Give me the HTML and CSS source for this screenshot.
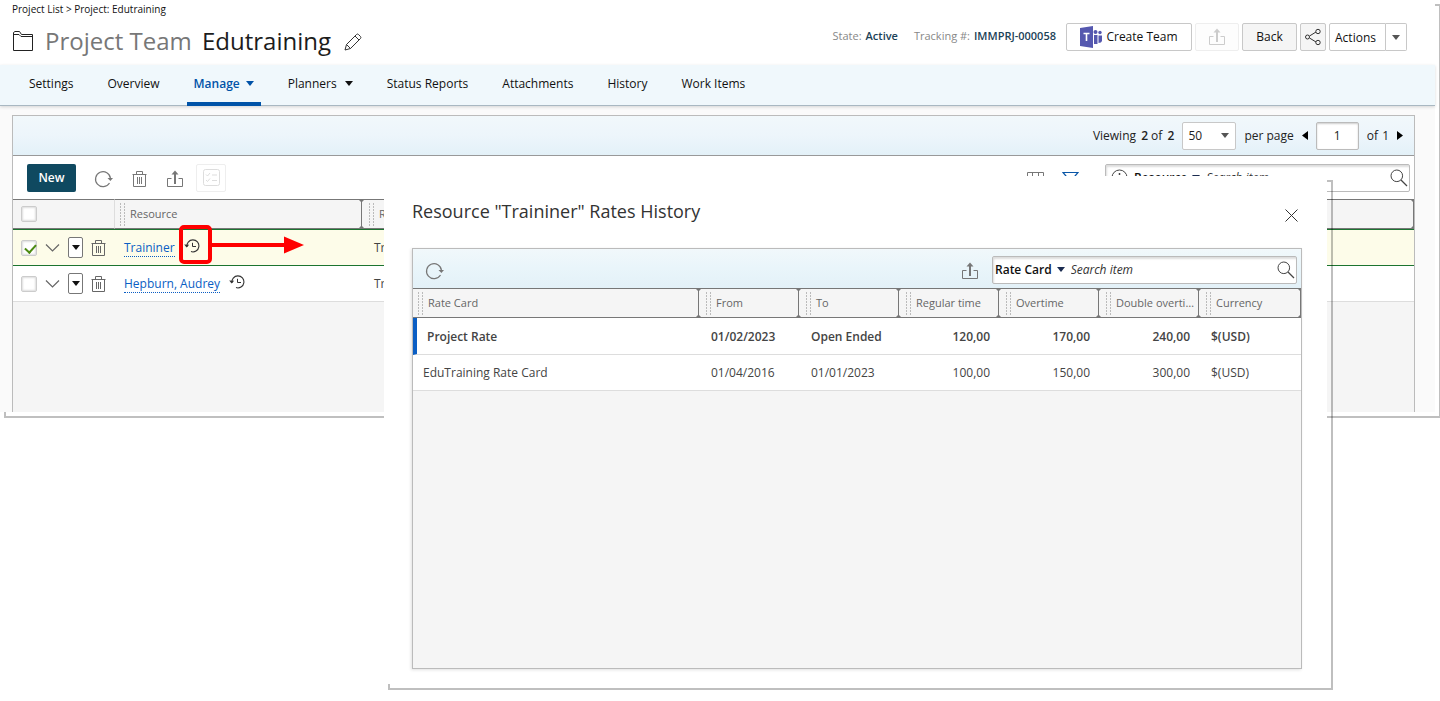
FILE: index.html
```
<!DOCTYPE html>
<html lang="en">
<head>
<meta charset="utf-8">
<title>Project Team Edutraining</title>
<link rel="stylesheet" href="styles.css">
</head>
<body>
<svg class="sprite" aria-hidden="true">
  <symbol id="i-share" viewBox="0 0 18 18"><path d="M5.5 8.5H1.5V16.5H16.5V8.5H12.5" fill="none" stroke="currentColor"/><path d="M9 14V2.500" stroke="currentColor" stroke-width="2"/><path d="M5.500 4.500L9 .5L12.500 4.500Z" fill="currentColor"/></symbol>
  <symbol id="i-refresh" viewBox="0 0 20 18"><path d="M15.500 13A7.500 7.500 0 1 1 16.500 8.500" fill="none" stroke="currentColor" stroke-width="1.200"/><path d="M13.500 8H19L16.400 11Z" fill="currentColor"/></symbol>
  <symbol id="i-trash" viewBox="0 0 16 18"><path d="M.5 4.500H14.500M4.500 4V1.500H10.500V4M1.500 4.500V16.500H13.500V4.500M5.500 7V14M7.500 7V14M9.500 7V14" fill="none" stroke="currentColor"/></symbol>
  <symbol id="i-chev" viewBox="0 0 15 10"><path d="M1 1.500L7.500 8L14 1.500" fill="none" stroke="currentColor" stroke-width="1.200"/></symbol>
  <symbol id="i-caret" viewBox="0 0 8 5"><path d="M0 0H8L4 5Z" fill="currentColor"/></symbol>
  <symbol id="i-history" viewBox="0 0 16 14"><path d="M3 8A6 6 0 1 1 7 12.600" fill="none" stroke="currentColor" stroke-width="1.100"/><path d="M.2 5.500L5.200 5.800L2.600 8.500Z" fill="currentColor"/><path d="M8.500 3.800V7.500H12" fill="none" stroke="currentColor"/></symbol>
  <symbol id="i-search" viewBox="0 0 18 18"><circle cx="6.800" cy="6.800" r="5.800" fill="none" stroke="currentColor"/><path d="M11 11L17 17" stroke="currentColor" stroke-width="1.200"/></symbol>
</svg>

<div class="window project">
  <main class="page">
    <header class="header">
      <div class="heading">
        <nav class="crumbs"><a href="#">Project List</a> &gt; <a href="#">Project: Edutraining</a></nav>
        <div class="title-row">
          <svg class="folder" width="22" height="22" viewBox="0 0 22 22" fill="none" stroke="#222"><path d="M1.500 20.500V2.500L3 1.500H7.500L9.500 4.500H20.500V20.500ZM1.500 4.500H7L9 6.500H20.500"/></svg>
          <h1><span>Project Team</span> Edutraining</h1>
          <button class="plain" aria-label="Edit title"><svg width="18" height="18" viewBox="0 0 18 18" fill="none" stroke="#333"><path d="M1 17L2.500 11.500L12.500 1.500Q13.500.5 14.500 1.500L16.500 3.500Q17.300 4.500 16.500 5.500L6.500 15.500ZM2.500 11.500L6.500 15.500M11 3L15 7"/></svg></button>
        </div>
      </div>
      <div class="header-side">
        <dl class="facts"><div><dt>State:</dt><dd>Active</dd></div><div><dt>Tracking #:</dt><dd>IMMPRJ-000058</dd></div></dl>
        <button class="btn team"><svg width="22" height="22" viewBox="0 0 22 22" fill="#5558af"><path d="M0 2L13 0V22L0 20Z"/><circle cx="15.500" cy="6" r="2"/><circle cx="20" cy="6.500" r="1.700"/><path d="M14 9H17.500V18H14ZM18.500 9.500H22V15Q21.500 17 18.500 17Z"/><path d="M3.500 7.500H9.500M6.500 7.500V15" fill="none" stroke="#fff" stroke-width="1.600"/></svg>Create Team</button>
        <button class="btn export" aria-label="Export" disabled><svg width="18" height="18"><use href="#i-share"/></svg></button>
        <button class="btn grey back">Back</button>
        <button class="btn grey link" aria-label="Share link"><svg width="16" height="18" viewBox="0 0 16 18" fill="none" stroke="#333"><path d="M4.500 8L11 4M4.500 10L11 14"/><circle cx="2.500" cy="9" r="2"/><circle cx="13" cy="3.500" r="2.200"/><circle cx="13" cy="14.500" r="2.200"/></svg></button>
        <div class="split"><button class="btn actions">Actions</button><button class="btn more" aria-label="More actions"><svg width="8" height="5"><use href="#i-caret"/></svg></button></div>
      </div>
    </header>
    <nav class="tabs">
      <a href="#">Settings</a><a href="#">Overview</a>
      <a href="#" class="active">Manage<svg width="8" height="5"><use href="#i-caret"/></svg></a>
      <a href="#">Planners<svg width="8" height="5"><use href="#i-caret"/></svg></a>
      <a href="#">Status Reports</a><a href="#">Attachments</a><a href="#">History</a><a href="#">Work Items</a>
    </nav>
    <section class="content">
      <div class="panel">
        <div class="pager">
          <span class="count">Viewing <b>2</b> of <b>2</b></span>
          <span class="select"><select aria-label="Items per page"><option>50</option></select><svg width="8" height="5"><use href="#i-caret"/></svg></span>
          <span>per page</span>
          <button class="plain arrow" aria-label="Previous page"><svg width="6" height="9"><path d="M6 0V9L0 4.500Z"/></svg></button>
          <input class="pageno" aria-label="Page" value="1">
          <span>of <span class="total">1</span></span>
          <button class="plain arrow" aria-label="Next page"><svg width="6" height="9"><path d="M0 0V9L6 4.500Z"/></svg></button>
        </div>
        <div class="toolbar">
          <button class="new">New</button>
          <button class="plain tool" aria-label="Refresh"><svg width="20" height="18"><use href="#i-refresh"/></svg></button>
          <button class="plain tool" aria-label="Delete"><svg width="16" height="18"><use href="#i-trash"/></svg></button>
          <button class="plain tool" aria-label="Export"><svg width="18" height="18"><use href="#i-share"/></svg></button>
          <button class="btn list" aria-label="Bulk edit" disabled><svg width="17" height="17" viewBox="0 0 17 17" fill="none" stroke="currentColor"><rect x=".5" y=".5" width="16" height="16" rx="2"/><path d="M3 5.500L4.500 7L7 4M3 11L4.500 12.500L7 9.500M9 6H14M9 11.500H14"/></svg></button>
          <span class="grow"></span>
          <button class="plain tool" aria-label="Columns"><svg width="17" height="16" viewBox="0 0 17 16" fill="none" stroke="currentColor"><path d="M.5 1.500H16.500V15.500H.5ZM5.500 1.500V15.500M11.500 1.500V15.500"/></svg></button>
          <button class="plain tool filter" aria-label="Filter"><svg width="17" height="16" viewBox="0 0 17 16" fill="none" stroke="currentColor" stroke-width="1.200"><path d="M1 1.500H16L10.500 8V15L6.500 12V8Z"/></svg></button>
          <div class="search wide">
            <svg width="17" height="17" viewBox="0 0 17 17" fill="none" stroke="#444"><circle cx="8.500" cy="8.500" r="7.500"/><path d="M8.500 4V6M8.500 7.500V13" stroke-width="1.500"/></svg>
            <button class="plain field">Resource<svg width="8" height="5"><use href="#i-caret"/></svg></button>
            <input aria-label="Search resources" placeholder="Search item">
            <button class="plain" aria-label="Search"><svg width="18" height="18"><use href="#i-search"/></svg></button>
          </div>
        </div>
        <table class="grid resources">
          <colgroup><col class="c-tools"><col class="c-name"><col></colgroup>
          <thead><tr><th class="lead"><input type="checkbox" aria-label="Select all"></th><th class="grip">Resource</th><th class="grip">Role</th></tr></thead>
          <tbody>
            <tr class="selected">
              <td><div class="tools"><input type="checkbox" aria-label="Select Traininer" checked><button class="plain" aria-label="Expand"><svg width="15" height="10"><use href="#i-chev"/></svg></button><button class="menu" aria-label="Row menu"><svg width="8" height="5"><use href="#i-caret"/></svg></button><button class="plain" aria-label="Delete"><svg width="16" height="18"><use href="#i-trash"/></svg></button></div></td>
              <td><div class="name"><a href="#">Traininer</a><span class="history"><button class="plain" aria-label="Rates history"><svg width="16" height="14"><use href="#i-history"/></svg></button><svg class="marker" width="126" height="40" viewBox="0 0 126 40"><rect x="2" y="2" width="29" height="35" rx="3" fill="none" stroke="#f00" stroke-width="4"/><path d="M32 20H107" stroke="#f00" stroke-width="4"/><path d="M105 11.500L125 20L105 28.500Z" fill="#f00"/></svg></span></div></td>
              <td>Trainer</td>
            </tr>
            <tr>
              <td><div class="tools"><input type="checkbox" aria-label="Select Hepburn, Audrey"><button class="plain" aria-label="Expand"><svg width="15" height="10"><use href="#i-chev"/></svg></button><button class="menu" aria-label="Row menu"><svg width="8" height="5"><use href="#i-caret"/></svg></button><button class="plain" aria-label="Delete"><svg width="16" height="18"><use href="#i-trash"/></svg></button></div></td>
              <td><div class="name"><a href="#">Hepburn, Audrey</a><span class="history"><button class="plain" aria-label="Rates history"><svg width="16" height="14"><use href="#i-history"/></svg></button></span></div></td>
              <td>Trainer</td>
            </tr>
          </tbody>
        </table>
      </div>
    </section>
  </main>
</div>

<div class="window dialog" role="dialog" aria-labelledby="dlg-title">
  <div class="dialog-body">
    <div class="dialog-head">
      <h2 id="dlg-title">Resource "Traininer" Rates History</h2>
      <button class="plain" aria-label="Close"><svg width="13" height="13" viewBox="0 0 13 13" stroke="#333"><path d="M.5 .5L12.500 12.500M12.500 .5L.5 12.500"/></svg></button>
    </div>
    <div class="panel rates">
      <div class="ratebar">
        <button class="plain tool" aria-label="Refresh"><svg width="20" height="18"><use href="#i-refresh"/></svg></button>
        <span class="grow"></span>
        <button class="plain tool" aria-label="Export"><svg width="18" height="18"><use href="#i-share"/></svg></button>
        <div class="search">
          <button class="plain field">Rate Card<svg width="8" height="5"><use href="#i-caret"/></svg></button>
          <input aria-label="Search rate cards" placeholder="Search item">
          <button class="plain" aria-label="Search"><svg width="18" height="18"><use href="#i-search"/></svg></button>
        </div>
      </div>
      <table class="grid">
        <colgroup><col><col class="c-rate"><col class="c-rate"><col class="c-rate"><col class="c-rate"><col class="c-rate"><col class="c-rate"></colgroup>
        <thead><tr><th class="grip">Rate Card</th><th class="grip">From</th><th class="grip">To</th><th class="grip">Regular time</th><th class="grip">Overtime</th><th class="grip">Double overtime</th><th class="grip">Currency</th></tr></thead>
        <tbody>
          <tr class="current"><td>Project Rate</td><td>01/02/2023</td><td>Open Ended</td><td class="num">120,00</td><td class="num">170,00</td><td class="num">240,00</td><td>$(USD)</td></tr>
          <tr><td>EduTraining Rate Card</td><td>01/04/2016</td><td>01/01/2023</td><td class="num">100,00</td><td class="num">150,00</td><td class="num">300,00</td><td>$(USD)</td></tr>
        </tbody>
      </table>
    </div>
  </div>
</div>
</body>
</html>
```
FILE: styles.css
```
* { box-sizing: border-box; }
body { margin: 0; position: relative; min-height: 100vh; overflow: hidden; background: #fff; font: 12px/16px "Open Sans", sans-serif; color: #222; }
button, input, select { font: inherit; color: inherit; }
button { padding: 0; }
a { color: inherit; text-decoration: none; }
svg { display: block; flex: none; }
.sprite { position: absolute; width: 0; height: 0; }
.plain { border: 0; background: none; display: flex; align-items: center; }
.grow { flex: 1; }

/* Offset outline behind each window */
.window { position: relative; isolation: isolate; }
.window::before { content: ""; position: absolute; inset: 4px -6px -6px 4px; border: 2px solid rgba(0, 0, 0, .25); z-index: -1; }
.project { margin-right: 5px; }
.page { background: #fff; }

.header { display: flex; justify-content: space-between; height: 65px; padding: 0 28px 0 12px; }
.crumbs { font-size: 10px; line-height: 18px; color: #111; }
.title-row { display: flex; align-items: center; height: 46px; }
.title-row .plain { margin-left: 13px; padding-top: 2px; }
h1 { margin: 0 0 0 11px; font-size: 24px; line-height: 32px; font-weight: 400; color: #1c1c1c; }
h1 span { color: #777; margin-right: 4px; }
.header-side { display: flex; gap: 3px; padding-top: 23px; align-items: flex-start; }
.facts { display: flex; gap: 16px; margin: 0 7px 0 0; font-size: 11px; line-height: 26px; }
.facts div { display: flex; gap: 4px; }
.facts dt { color: #888; }
.facts dd { margin: 0; color: #1b4257; font-weight: 600; }
.btn { display: flex; align-items: center; justify-content: center; height: 28px; border: 1px solid #c8c8c8; border-radius: 2px; background: #fff; color: #111; }
.grey { background: #f5f5f5; }
.team { width: 126px; gap: 4px; }
.export { width: 44px; border-color: #eee; color: #ccc; background: #fdfdfd; }
.back { width: 55px; }
.link { width: 26px; }
.split { display: flex; }
.actions { width: 57px; padding: 1px 4px 0 0; border-radius: 2px 0 0 2px; }
.more { width: 21px; border-left: 0; border-radius: 0 2px 2px 0; color: #555; }

.tabs { position: relative; display: flex; gap: 20px; height: 41px; padding-left: 22px; background: #f0f8fc; border-bottom: 1px solid #a9b8c2; box-shadow: 0 1px 3px rgba(0, 0, 0, .15); }
.tabs a { display: flex; align-items: center; gap: 8px; height: 41px; padding: 0 7px; border-bottom: 4px solid transparent; color: #111; }
.tabs .active { gap: 6px; color: #0053a8; border-color: #0053a8; font-weight: 600; }

.content { padding: 9px 20px 0 12px; background: #fafafa; }
.panel { border: 1px solid #bbb; background: #f5f5f5; }
.content .panel { border-bottom: 0; min-height: 297px; }
.pager { display: flex; align-items: center; justify-content: flex-end; gap: 8px; height: 40px; padding-right: 11px; background: linear-gradient(#f1f8fb, #edf5fb 50%, #e3f1f8); border-bottom: 1px solid #999; }
.pager b { margin-left: 2px; font-weight: 600; }
.total { margin-left: 1px; }
.select { position: relative; display: flex; align-items: center; }
.select select { appearance: none; width: 54px; height: 28px; padding: 0 5px; border: 1px solid #c8c8c8; border-radius: 2px; background: #fff; }
.select svg { position: absolute; right: 7px; color: #555; pointer-events: none; }
.arrow { height: 16px; }
.pageno { width: 43px; height: 28px; padding: 0; text-align: center; border: 1px solid #bbb; border-radius: 2px; background: #fff; box-shadow: inset 0 1px 2px rgba(0, 0, 0, .2); }

.toolbar { display: flex; align-items: center; gap: 18px; height: 43px; padding: 0 4px 0 14px; background: #fff; }
.new { width: 49px; height: 28px; border: 0; border-radius: 2px; background: #0f4960; color: #fff; font-weight: 600; }
.tool { padding-top: 2px; color: #777; }
.list { width: 30px; margin-left: -6px; border-color: #eee; color: #ddd; }
.filter { color: #0a57a8; margin-right: 8px; }
.search { display: flex; align-items: center; gap: 6px; width: 305px; height: 28px; padding: 0 1px 0 2px; background: #fff; border: 1px solid #bbb; border-radius: 2px; box-shadow: inset 1px 2px 2px #ddd; }
.search.wide { padding-left: 5px; }
.search input { flex: 1; min-width: 0; padding: 0; border: 0; background: none; outline: 0; }
.search input::placeholder { color: #333; font-style: italic; opacity: 1; }
.search > .plain:last-child { color: #444; }
.field { gap: 5px; font-weight: 600; color: #111; }
.field svg { color: #1a2b50; }

.grid { width: 100%; table-layout: fixed; border-collapse: separate; border-spacing: 0; color: #444; background: #fff; }
.grid th { position: relative; height: 30px; padding: 0 4px 0 15px; background: #f5f5f5; border: solid #777; border-width: 1px 0; font-size: 11px; font-weight: 400; text-align: left; color: #666; white-space: nowrap; overflow: hidden; text-overflow: ellipsis; }
.grid th.grip::before { content: ""; position: absolute; left: 5px; top: 3px; width: 5px; height: 23px; background: repeating-linear-gradient(transparent 0 2px, #f5f5f5 2px 3px), linear-gradient(90deg, #bbb 0 1px, transparent 1px 4px, #bbb 4px 5px); }
.grid th.grip::after { content: ""; position: absolute; right: 0; top: 0; width: 5px; height: 28px; background: #777; clip-path: polygon(0 0, 100% 0, 3px 2px, 3px 26px, 100% 100%, 0 100%, 2px 26px, 2px 2px); }
.grid th.grip:last-child::after { right: -2px; }
.grid td { height: 36px; padding: 1px 11px 0 10px; border-bottom: 1px solid #ddd; white-space: nowrap; }
.c-tools { width: 102px; }
.c-name { width: 249px; }
.c-rate { width: 100px; }
.resources td:first-child, .grid th.lead { padding: 0 0 0 8px; }
.grid th.lead { border-right: 1px solid #ddd; }
.resources td:nth-child(2) { padding: 2px 0 0 9px; }
.selected td { height: 37px; background: #fdfce9; border-top: 1px solid #1c7430; border-bottom-color: #1c7430; }
.tools { display: flex; align-items: center; gap: 8px; color: #666; }
[type="checkbox"] { appearance: none; display: block; flex: none; width: 16px; height: 16px; margin: 0; background: #fff; border: 1px solid #ccc; border-radius: 2px; box-shadow: inset 0 0 2px 1px #ddd; }
[type="checkbox"]:checked::after { content: ""; display: block; width: 5px; height: 9px; margin: 1px 0 0 5px; border: solid #4c8a12; border-width: 0 2px 2px 0; transform: rotate(42deg); }
.menu { display: flex; align-items: center; justify-content: center; width: 15px; height: 21px; border: 1px solid #777; border-radius: 2px; background: #fff; color: #111; }
.name { display: flex; align-items: center; gap: 9px; }
.name a { color: #0a5ec4; border-bottom: 1px dotted #0a5ec4; }
.history { position: relative; color: #333; }
.history .plain { margin-bottom: 5px; }
.marker { position: absolute; left: -5px; top: -14px; pointer-events: none; }

.dialog { position: absolute; left: 384px; right: 113px; top: 176px; z-index: 2; }
.dialog-body { padding: 23px 25px 15px 28px; background: #fff; }
.dialog-head { display: flex; justify-content: space-between; height: 49px; padding-right: 4px; }
.dialog-head .plain { height: 32px; }
h2 { margin: 0; font-size: 18px; line-height: 24px; font-weight: 400; color: #333; }
.rates { min-height: 421px; box-shadow: -1px 1px 3px rgba(0, 0, 0, .12); }
.ratebar { display: flex; align-items: center; gap: 13px; height: 39px; padding: 2px 4px 0 12px; background: linear-gradient(#f1f8fb, #e9f5fa 50%, #e3f1f8); }
.current td { height: 37px; padding-top: 2px; font-weight: 600; }
.current td:first-child { border-left: 4px solid #0a5ec4; }
.num { text-align: right; }
```
